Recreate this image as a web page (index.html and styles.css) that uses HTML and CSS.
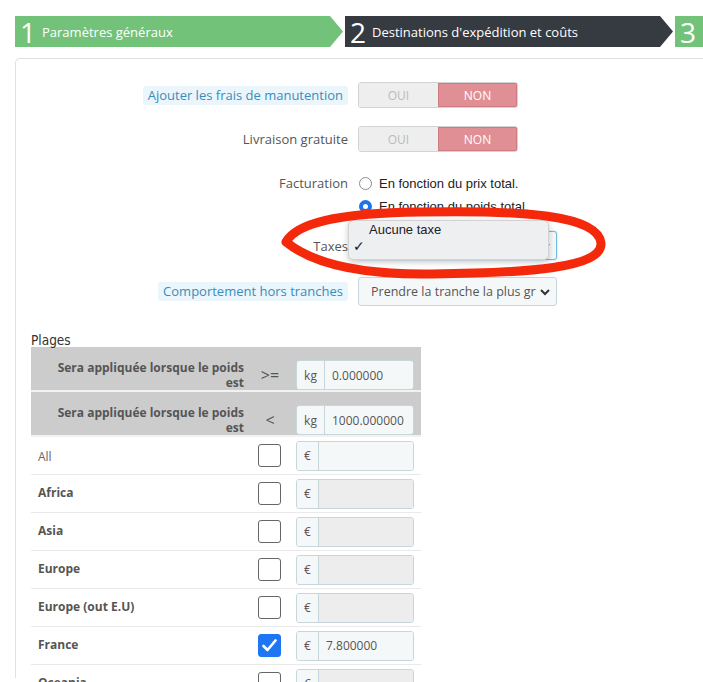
FILE: index.html
```html
<!DOCTYPE html>
<html>
<head>
    <title>Transporteur - Destinations d'expédition et coûts</title>
    <link rel="stylesheet" href="styles.css">
</head>
<body>
    <div class="wizard">
        <div class="step step-done"><span class="step-num">1</span><span class="step-title">Paramètres généraux</span></div>
        <div class="step step-current"><span class="step-num">2</span><span class="step-title">Destinations d'expédition et coûts</span></div>
        <div class="step step-done step-last"><span class="step-num">3</span></div>
    </div>

    <div class="panel">
        <div class="form-row">
            <div class="form-label"><span class="label-tooltip">Ajouter les frais de manutention</span></div>
            <div class="switch">
                <span class="switch-opt">OUI</span>
                <span class="switch-opt active">NON</span>
            </div>
        </div>

        <div class="form-row row-free">
            <div class="form-label">Livraison gratuite</div>
            <div class="switch">
                <span class="switch-opt">OUI</span>
                <span class="switch-opt active">NON</span>
            </div>
        </div>

        <div class="form-row row-billing">
            <div class="form-label">Facturation</div>
            <div class="radios">
                <div class="radio-line"><span class="radio"></span>En fonction du prix total.</div>
                <div class="radio-line"><span class="radio checked"></span>En fonction du poids total.</div>
            </div>
        </div>

        <div class="form-row row-tax">
            <div class="form-label">Taxes</div>
            <div class="select select-focus">
                <span class="select-text"></span>
                <svg class="chevron" width="10" height="7" viewBox="0 0 10 7"><polyline points="1,1 5,5 9,1" fill="none" stroke="#333" stroke-width="2"/></svg>
                <div class="dropdown">
                    <div class="dropdown-item">Aucune taxe</div>
                    <div class="dropdown-item"><span class="tick">✓</span></div>
                </div>
            </div>
        </div>

        <div class="form-row row-range">
            <div class="form-label"><span class="label-tooltip">Comportement hors tranches</span></div>
            <div class="select">
                <span class="select-text">Prendre la tranche la plus grande</span>
                <svg class="chevron" width="10" height="7" viewBox="0 0 10 7"><polyline points="1,1 5,5 9,1" fill="none" stroke="#333" stroke-width="2"/></svg>
            </div>
        </div>

        <h3 class="ranges-title">Plages</h3>

        <div class="ranges">
            <div class="range-row range-head">
                <div class="range-label">Sera appliquée lorsque le poids est</div>
                <div class="range-op">&gt;=</div>
                <div class="range-cell">
                    <div class="input-group"><span class="addon addon-kg">kg</span><span class="input">0.000000</span></div>
                </div>
            </div>
            <div class="range-row range-head">
                <div class="range-label">Sera appliquée lorsque le poids est</div>
                <div class="range-op">&lt;</div>
                <div class="range-cell">
                    <div class="input-group"><span class="addon addon-kg">kg</span><span class="input">1000.000000</span></div>
                </div>
            </div>

            <div class="range-row">
                <div class="range-label zone-all">All</div>
                <div class="range-op"><span class="checkbox"></span></div>
                <div class="range-cell">
                    <div class="input-group"><span class="addon">€</span><span class="input"></span></div>
                </div>
            </div>
            <div class="range-row">
                <div class="range-label">Africa</div>
                <div class="range-op"><span class="checkbox"></span></div>
                <div class="range-cell">
                    <div class="input-group"><span class="addon">€</span><span class="input disabled"></span></div>
                </div>
            </div>
            <div class="range-row">
                <div class="range-label">Asia</div>
                <div class="range-op"><span class="checkbox"></span></div>
                <div class="range-cell">
                    <div class="input-group"><span class="addon">€</span><span class="input disabled"></span></div>
                </div>
            </div>
            <div class="range-row">
                <div class="range-label">Europe</div>
                <div class="range-op"><span class="checkbox"></span></div>
                <div class="range-cell">
                    <div class="input-group"><span class="addon">€</span><span class="input disabled"></span></div>
                </div>
            </div>
            <div class="range-row">
                <div class="range-label">Europe (out E.U)</div>
                <div class="range-op"><span class="checkbox"></span></div>
                <div class="range-cell">
                    <div class="input-group"><span class="addon">€</span><span class="input disabled"></span></div>
                </div>
            </div>
            <div class="range-row">
                <div class="range-label">France</div>
                <div class="range-op">
                    <span class="checkbox checked">
                        <svg width="15" height="13" viewBox="0 0 15 13"><polyline points="1.5,7 5.5,11 13.5,1.5" fill="none" stroke="#fff" stroke-width="2.6" stroke-linecap="round" stroke-linejoin="round"/></svg>
                    </span>
                </div>
                <div class="range-cell">
                    <div class="input-group"><span class="addon">€</span><span class="input">7.800000</span></div>
                </div>
            </div>
            <div class="range-row">
                <div class="range-label">Oceania</div>
                <div class="range-op"><span class="checkbox"></span></div>
                <div class="range-cell">
                    <div class="input-group"><span class="addon">€</span><span class="input disabled"></span></div>
                </div>
            </div>
        </div>
    </div>

    <!-- annotation rouge par-dessus la capture -->
    <svg class="scribble" width="703" height="682" viewBox="0 0 703 682">
        <path d="M286 242 C296 224, 334 213, 420 212 C522 210, 598 215, 601 243 C603 268, 528 273, 432 274 C360 275, 312 263, 286 242 Z" fill="none" stroke="#f4290b" stroke-width="9" stroke-linejoin="round"/>
    </svg>
</body>
</html>
```

FILE: styles.css
```css
* {
    margin: 0;
    padding: 0;
    box-sizing: border-box;
}

body {
    position: relative;
    width: 703px;
    height: 682px;
    overflow: hidden;
    background: #fff;
    font-family: 'Open Sans', sans-serif;
    font-size: 13px;
    color: #555;
}

/* Etapes de l'assistant */
.wizard {
    display: flex;
    gap: 2px;
    margin-top: 16px;
    padding-left: 15px;
    height: 31px;
    white-space: nowrap;
}

.step {
    flex: 0 0 328px;
    display: flex;
    align-items: center;
    color: #fff;
    padding-left: 5px;
    clip-path: polygon(0 0, calc(100% - 13px) 0, 100% 50%, calc(100% - 13px) 100%, 0 100%);
}

.step-last {
    flex-basis: 28px;
    clip-path: none;
}

.step-done {
    background: #72c279;
}

.step-current {
    background: #363a41;
}

.step-num {
    font-size: 28px;
    font-weight: 400;
    line-height: 1;
    margin-right: 6px;
}

.step-title {
    font-size: 13px;
}

/* Panneau */
.panel {
    margin: 11px 0 0 15px;
    border: 1px solid #e1e1e1;
    border-right: none;
    border-bottom: none;
    border-top-left-radius: 5px;
    padding: 23px 0 0 15px;
    height: 620px;
}

.form-row {
    display: flex;
    align-items: center;
    margin-left: -15px;
}

.form-label {
    width: 332px;
    text-align: right;
    margin-right: 10px;
    color: #555;
    white-space: nowrap;
}

.label-tooltip {
    display: inline-block;
    background: #eaf6fb;
    color: #3a8cbc;
    border-radius: 3px;
    padding: 0 5px;
    line-height: 19px;
}

.switch {
    display: flex;
    width: 160px;
    height: 26px;
    border: 1px solid #d3d3d3;
    border-radius: 3px;
    overflow: hidden;
}

.switch-opt {
    flex: 1;
    display: flex;
    align-items: center;
    justify-content: center;
    background: #eee;
    color: #bbb;
    font-size: 12px;
}

.switch-opt.active {
    background: #e08f95;
    color: #fff;
    box-shadow: inset 0 0 0 1px #cd7c82;
}

.row-free {
    margin-top: 18px;
}

.row-billing {
    margin-top: 20px;
    align-items: flex-start;
}

.row-billing .form-label {
    line-height: 23px;
}

.radios {
    font-family: 'Liberation Sans', Arial, sans-serif;
    font-size: 13px;
    color: #222;
}

.radio-line {
    display: flex;
    align-items: center;
    line-height: 23px;
    margin-left: 1px;
}

.radio {
    width: 13px;
    height: 13px;
    border: 1px solid #8b8b8b;
    border-radius: 50%;
    background: #fff;
    margin-right: 7px;
}

.radio.checked {
    border: 4px solid #1b73f0;
    background: #fff;
}

.row-tax {
    margin-top: 13px;
}

.select {
    position: relative;
    width: 199px;
    height: 29px;
    border: 1px solid #c7d6db;
    border-radius: 3px;
    background: #f5f8f9;
    display: flex;
    align-items: center;
    padding: 0 20px 0 12px;
}

.select-focus {
    border-color: #73b8e6;
    box-shadow: 0 0 2px rgba(102, 175, 233, 0.6);
}

.select-text {
    overflow: hidden;
    white-space: nowrap;
    color: #555;
    font-size: 12.5px;
}

.chevron {
    position: absolute;
    right: 6px;
    top: 11px;
}

.dropdown {
    position: absolute;
    left: -11px;
    top: -12px;
    width: 201px;
    height: 40px;
    background: #eeeff1;
    border: 1px solid #d2d2d4;
    border-radius: 5px;
    box-shadow: 0 2px 6px rgba(0, 0, 0, 0.22);
    font-family: 'Liberation Sans', Arial, sans-serif;
    font-size: 13px;
    color: #222;
}

.dropdown-item {
    line-height: 17px;
    padding-left: 20px;
}

.dropdown-item .tick {
    font-family: 'DejaVu Sans', sans-serif;
    font-size: 14px;
    margin-left: -16px;
}

.row-range {
    margin-top: 17px;
}

/* Plages */
.ranges-title {
    font-family: 'DejaVu Sans Condensed', 'DejaVu Sans', sans-serif;
    font-stretch: condensed;
    font-weight: normal;
    font-size: 13.5px;
    line-height: 14px;
    color: #333;
    margin-top: 27px;
}

.ranges {
    width: 390px;
}

.range-row {
    display: grid;
    grid-template-columns: 219px 40px 131px;
    align-items: center;
    height: 38px;
    border-bottom: 1px solid #eaeaea;
}

.range-head {
    height: 45px;
    background: #cccccc;
    border-bottom: 2px solid #f2f2f2;
    padding: 13px 0 1px;
}

.range-label {
    padding-left: 7px;
    padding-bottom: 2px;
    font-size: 12px;
    font-weight: 700;
    color: #555;
}

.range-head .range-label {
    text-align: right;
    padding: 0 6px 0 14px;
    line-height: 15px;
}

.zone-all {
    font-weight: 400;
    color: #666;
    padding-top: 2px;
    padding-bottom: 0;
}

.range-op {
    display: flex;
    justify-content: center;
    font-size: 16px;
    color: #555;
}

.checkbox {
    width: 23px;
    height: 23px;
    border: 1px solid #666;
    border-radius: 3px;
    background: #fff;
    display: flex;
    align-items: center;
    justify-content: center;
    margin-left: -1px;
}

.checkbox.checked {
    background: #1f76f5;
    border-color: #1f76f5;
}

.range-cell {
    padding-left: 6px;
}

.input-group {
    display: flex;
    width: 118px;
    height: 30px;
    border: 1px solid #c7d6db;
    border-radius: 3px;
    overflow: hidden;
    font-size: 12px;
    color: #555;
}

.addon {
    flex: 0 0 22px;
    display: flex;
    align-items: center;
    justify-content: center;
    background: #f5f8f9;
    border-right: 1px solid #c7d6db;
}

.addon-kg {
    flex-basis: 28px;
}

.input {
    flex: 1;
    display: flex;
    align-items: center;
    padding-left: 7px;
    background: #f5f8f9;
    white-space: nowrap;
}

.input.disabled {
    background: #ededed;
}

.scribble {
    position: absolute;
    left: 0;
    top: 0;
    pointer-events: none;
}
```
